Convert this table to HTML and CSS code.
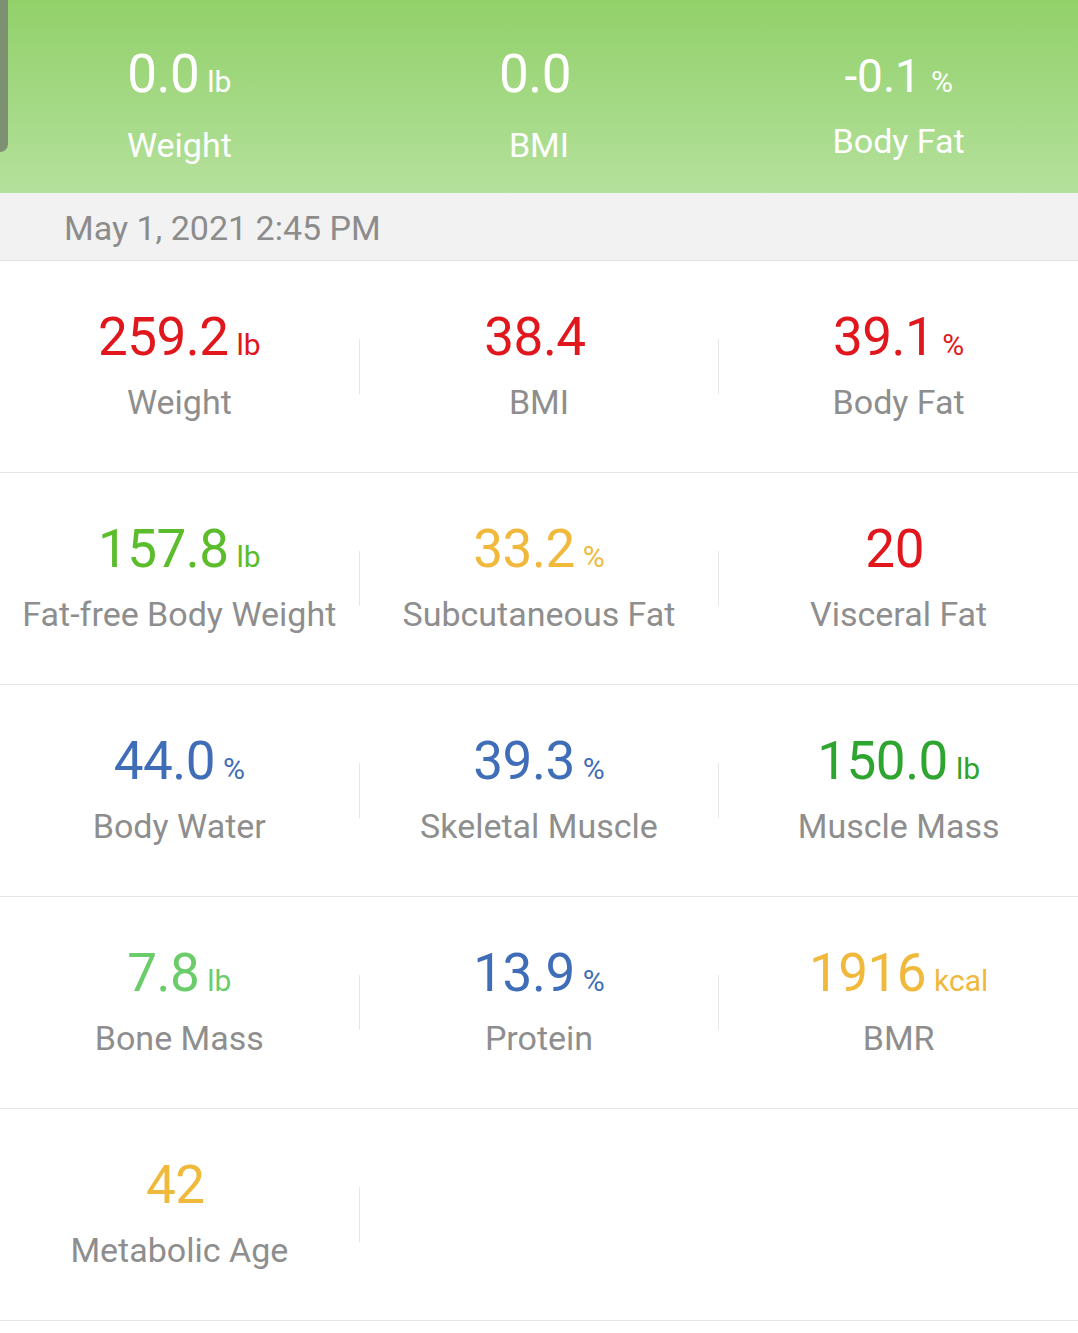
FILE: index.html
```html
<!DOCTYPE html>
<html lang="en">
<head>
<meta charset="utf-8">
<title>Body composition</title>
<link rel="stylesheet" href="styles.css">
</head>
<body>
<div class="page">
  <header class="summary">
    <div class="handle"></div>
    <div class="sum-cell">
      <div class="value"><span class="num">0.0</span><span class="unit">lb</span></div>
      <div class="label">Weight</div>
    </div>
    <div class="sum-cell">
      <div class="value"><span class="num">0.0</span><span class="unit"></span></div>
      <div class="label">BMI</div>
    </div>
    <div class="sum-cell">
      <div class="value"><span class="num num-small">-0.1</span><span class="unit unit-small">%</span></div>
      <div class="label label-up">Body Fat</div>
    </div>
  </header>

  <div class="date-bar">May 1, 2021 2:45 PM</div>

  <section class="metrics">
    <div class="row">
      <div class="cell">
        <div class="value red"><span class="num">259.2</span><span class="unit">lb</span></div>
        <div class="label">Weight</div>
      </div>
      <div class="divider"></div>
      <div class="cell">
        <div class="value red"><span class="num">38.4</span><span class="unit"></span></div>
        <div class="label">BMI</div>
      </div>
      <div class="divider"></div>
      <div class="cell">
        <div class="value red"><span class="num">39.1</span><span class="unit">%</span></div>
        <div class="label">Body Fat</div>
      </div>
    </div>

    <div class="row">
      <div class="cell">
        <div class="value green"><span class="num">157.8</span><span class="unit">lb</span></div>
        <div class="label">Fat-free Body Weight</div>
      </div>
      <div class="divider"></div>
      <div class="cell">
        <div class="value yellow"><span class="num">33.2</span><span class="unit">%</span></div>
        <div class="label">Subcutaneous Fat</div>
      </div>
      <div class="divider"></div>
      <div class="cell">
        <div class="value red"><span class="num">20</span><span class="unit"></span></div>
        <div class="label">Visceral Fat</div>
      </div>
    </div>

    <div class="row">
      <div class="cell">
        <div class="value blue"><span class="num">44.0</span><span class="unit">%</span></div>
        <div class="label">Body Water</div>
      </div>
      <div class="divider"></div>
      <div class="cell">
        <div class="value blue"><span class="num">39.3</span><span class="unit">%</span></div>
        <div class="label">Skeletal Muscle</div>
      </div>
      <div class="divider"></div>
      <div class="cell">
        <div class="value dark-green"><span class="num">150.0</span><span class="unit">lb</span></div>
        <div class="label">Muscle Mass</div>
      </div>
    </div>

    <div class="row">
      <div class="cell">
        <div class="value light-green"><span class="num">7.8</span><span class="unit">lb</span></div>
        <div class="label">Bone Mass</div>
      </div>
      <div class="divider"></div>
      <div class="cell">
        <div class="value blue"><span class="num">13.9</span><span class="unit">%</span></div>
        <div class="label">Protein</div>
      </div>
      <div class="divider"></div>
      <div class="cell">
        <div class="value yellow"><span class="num">1916</span><span class="unit">kcal</span></div>
        <div class="label">BMR</div>
      </div>
    </div>

    <div class="row">
      <div class="cell">
        <div class="value yellow"><span class="num">42</span><span class="unit"></span></div>
        <div class="label">Metabolic Age</div>
      </div>
      <div class="divider"></div>
      <div class="cell"></div>
      <div class="divider hidden"></div>
      <div class="cell"></div>
    </div>
  </section>
</div>
</body>
</html>
```

FILE: styles.css
```css
* {
  box-sizing: border-box;
}

html, body {
  margin: 0;
  padding: 0;
  background: #ffffff;
}

body {
  font-family: Roboto, "Noto Sans", "Liberation Sans", sans-serif;
  font-weight: 400;
  color: #8e8e8e;
}

.page {
  width: 1078px;
  min-height: 1333px;
  background: #ffffff;
}

/* ---------- top summary ---------- */
.summary {
  position: relative;
  height: 193px;
  display: grid;
  grid-template-columns: 1fr 1fr 1fr;
  column-gap: 1px;
  background: linear-gradient(180deg, #92d16a 0%, #a4d985 55%, #b5e19c 100%);
  color: #ffffff;
}

.handle {
  position: absolute;
  left: 0;
  top: 0;
  width: 8px;
  height: 152px;
  background: #7e9072;
  border-bottom-right-radius: 8px;
}

.sum-cell {
  display: flex;
  flex-direction: column;
  align-items: center;
  padding-top: 44px;
}

.sum-cell .label {
  margin-top: 21px;
  color: #ffffff;
}

.sum-cell .label-up {
  margin-top: 17px;
}

/* ---------- date bar ---------- */
.date-bar {
  height: 68px;
  padding: 4px 0 0 64px;
  font-size: 34px;
  line-height: 63px;
  color: #8c8c8c;
  background: #f2f2f2;
  border-bottom: 1px solid #e2e2e2;
  white-space: nowrap;
}

/* ---------- metrics grid ---------- */
.row {
  height: 212px;
  display: grid;
  grid-template-columns: 1fr 1px 1fr 1px 1fr;
  border-bottom: 1px solid #e6e6e6;
}

.cell {
  display: flex;
  flex-direction: column;
  align-items: center;
  padding-top: 46px;
  min-width: 0;
}

.divider {
  align-self: center;
  height: 55px;
  background: #e6e6e6;
}

.divider.hidden {
  background: transparent;
}

.value {
  display: block;
  font-size: 53px;
  line-height: 60px;
  height: 60px;
  white-space: nowrap;
}

.num {
  line-height: 1;
  letter-spacing: -0.5px;
}

.num-small {
  font-size: 46px;
  letter-spacing: 0;
}

.unit {
  display: inline-block;
  font-size: 30px;
  line-height: 1;
  margin-left: 8px;
}

.unit-small {
  font-size: 30px;
  margin-left: 10px;
}

.label {
  margin-top: 15px;
  font-size: 34px;
  line-height: 40px;
  color: #8e8e8e;
  white-space: nowrap;
}

/* ---------- value colours ---------- */
.red { color: #e0171c; }
.green { color: #5cbd2c; }
.yellow { color: #f0b93c; }
.blue { color: #3f6db8; }
.dark-green { color: #2ea52e; }
.light-green { color: #6acd6a; }
```
